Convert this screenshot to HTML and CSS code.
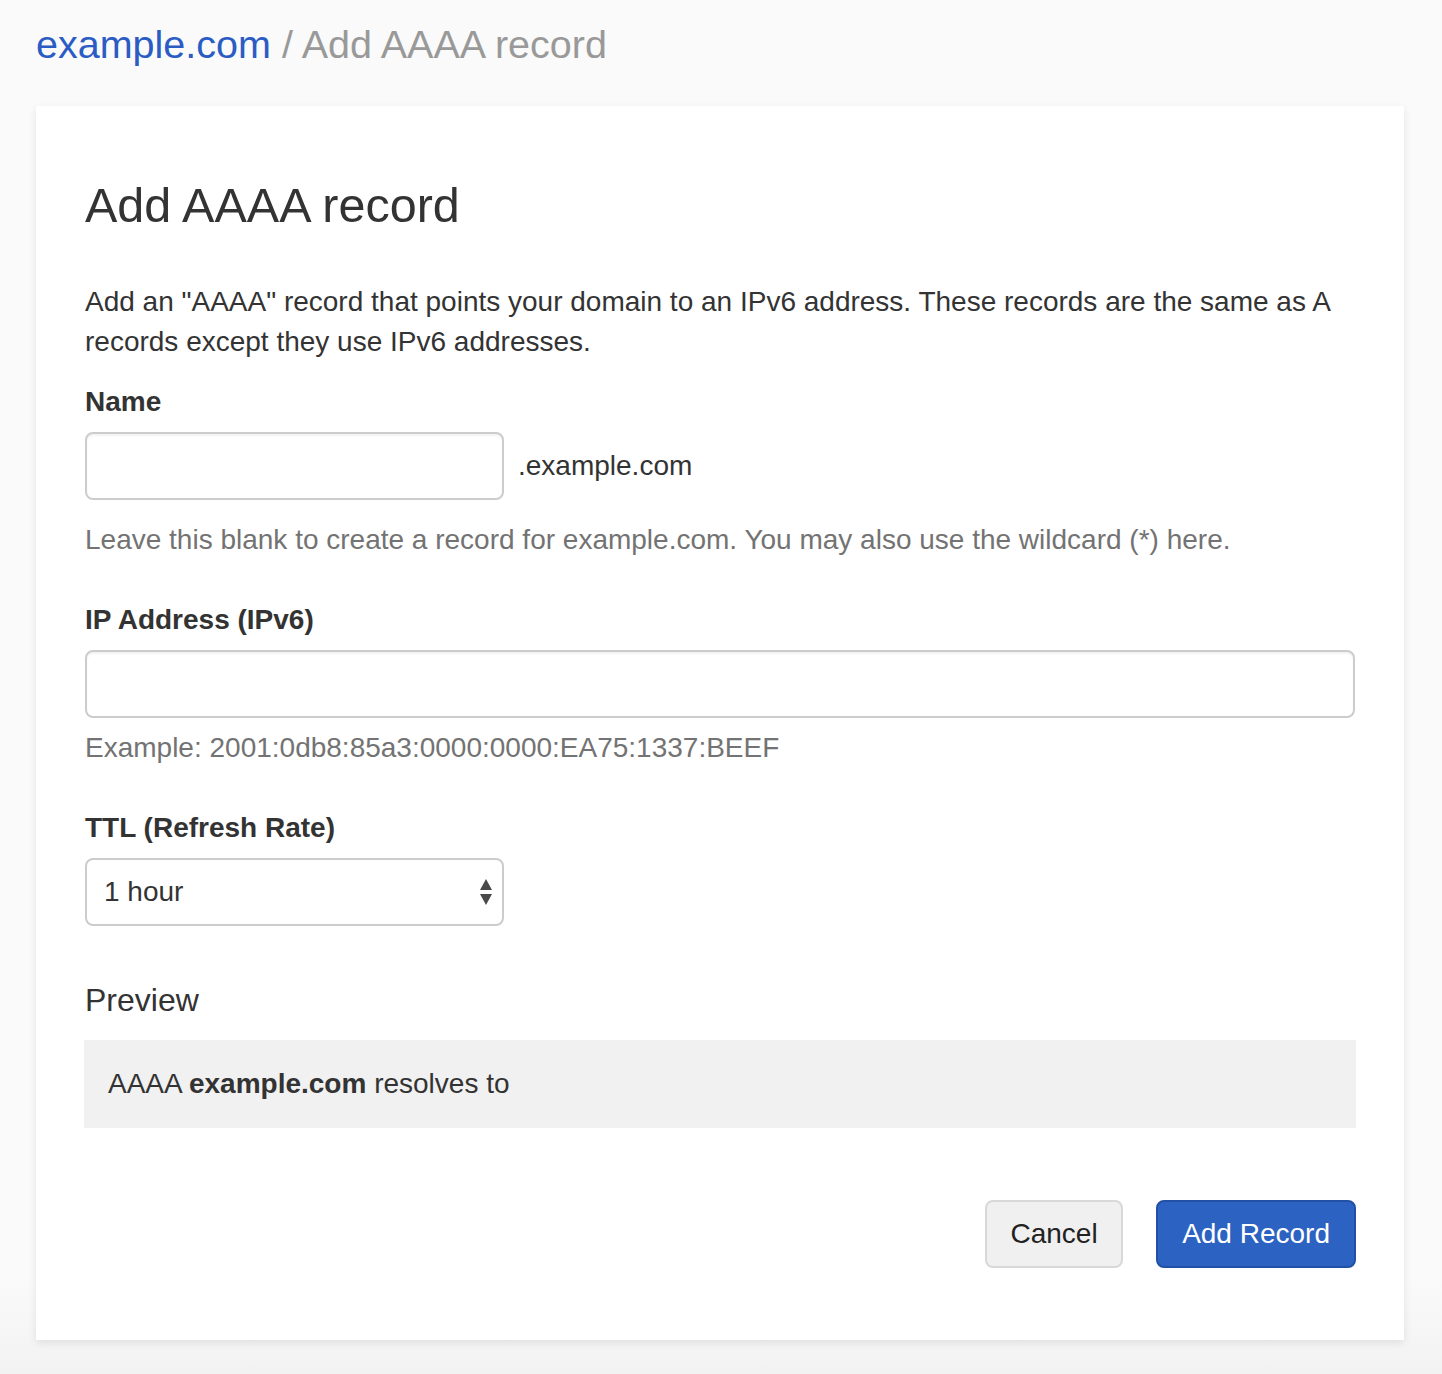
FILE: index.html
```html
<!DOCTYPE html>
<html lang="en">
<head>
<meta charset="utf-8">
<title>Add AAAA record</title>
<link rel="stylesheet" href="styles.css">
</head>
<body>
<div class="page">
  <div class="crumbs"><a class="crumb-link" href="#">example.com</a> <span class="crumb-sep">/</span> <span class="crumb-current">Add AAAA record</span></div>
  <div class="card">
    <h3 class="title">Add AAAA record</h3>
    <p class="intro">Add an "AAAA" record that points your domain to an IPv6 address. These records are the same as A records except they use IPv6 addresses.</p>

    <div class="group">
      <label class="label">Name</label>
      <div class="name-row">
        <input class="input input-name" type="text">
        <span class="suffix">.example.com</span>
      </div>
      <div class="help help-name">Leave this blank to create a record for example.com. You may also use the wildcard (*) here.</div>
    </div>

    <div class="group">
      <label class="label">IP Address (IPv6)</label>
      <input class="input input-wide" type="text">
      <div class="help">Example: 2001:0db8:85a3:0000:0000:EA75:1337:BEEF</div>
    </div>

    <div class="group">
      <label class="label">TTL (Refresh Rate)</label>
      <div class="select">
        <span class="select-value">1 hour</span>
        <svg class="select-arrows" width="14" height="28" viewBox="0 0 14 28"><path d="M7 1 L13 12 L1 12 Z" fill="#4a4a4a"/><path d="M1 16 L13 16 L7 27 Z" fill="#4a4a4a"/></svg>
      </div>
    </div>

    <div class="preview-title">Preview</div>
    <div class="preview">AAAA <strong>example.com</strong> resolves to</div>

    <div class="actions">
      <button class="btn btn-default" type="button">Cancel</button>
      <button class="btn btn-primary" type="button">Add Record</button>
    </div>
  </div>
</div>
</body>
</html>
```

FILE: styles.css
```css
html, body {
  margin: 0;
  padding: 0;
}
body {
  font-family: "Liberation Sans", Arial, Helvetica, sans-serif;
  color: #333;
  background: linear-gradient(to bottom, #fafafa 0, #fafafa 1280px, #f2f2f2 1374px);
  min-height: 1374px;
}
.page {
  padding: 22px 38px 0 36px;
}
.crumbs {
  font-size: 39.5px;
  line-height: 44px;
  color: #999;
  margin-bottom: 40px;
}
.crumb-link {
  color: #2b5cc4;
  text-decoration: none;
}
.card {
  background: #fff;
  box-shadow: 0 3px 8px rgba(0, 0, 0, 0.09);
  padding: 73px 49px 72px;
}
.title {
  font-size: 48.5px;
  font-weight: normal;
  line-height: 53px;
  margin: 0 0 50px;
}
.intro {
  font-size: 28px;
  line-height: 40px;
  margin: 0 0 20px;
}
.group {
  margin-bottom: 40px;
}
.label {
  display: block;
  font-size: 28px;
  line-height: 40px;
  font-weight: bold;
  margin-bottom: 10px;
}
.input {
  display: block;
  box-sizing: border-box;
  height: 68px;
  border: 2px solid #ccc;
  border-radius: 8px;
  background: #fff;
  font-family: inherit;
  font-size: 28px;
  padding: 0 24px;
  margin: 0;
  box-shadow: inset 0 2px 2px rgba(0, 0, 0, 0.05);
}
.name-row {
  display: flex;
  align-items: center;
  gap: 14px;
}
.input-name {
  width: 419px;
}
.suffix {
  font-size: 28px;
  line-height: 40px;
}
.input-wide {
  width: 100%;
}
.help {
  font-size: 28px;
  line-height: 40px;
  color: #737373;
  margin-top: 10px;
}
.help-name {
  margin-top: 20px;
}
.select {
  box-sizing: border-box;
  width: 419px;
  height: 68px;
  border: 2px solid #ccc;
  border-radius: 8px;
  display: flex;
  align-items: center;
  justify-content: space-between;
  padding: 0 9px 0 17px;
  font-size: 28px;
}
.select-arrows {
  display: block;
}
.preview-title {
  font-size: 32px;
  line-height: 35px;
  margin-top: 57px;
  margin-bottom: 22px;
}
.preview {
  background: #f1f1f1;
  font-size: 28px;
  line-height: 40px;
  padding: 24px;
  margin: 0 -1px;
}
.preview strong {
  font-weight: bold;
}
.actions {
  display: flex;
  justify-content: flex-end;
  gap: 33px;
  margin-top: 72px;
  margin-right: -1px;
}
.btn {
  box-sizing: border-box;
  height: 68px;
  padding: 0 23.5px;
  border-radius: 8px;
  font-family: inherit;
  font-size: 28px;
  line-height: 40px;
  cursor: pointer;
}
.btn-default {
  background: #f0f0f0;
  border: 2px solid #d8d8d8;
  color: #222;
}
.btn-primary {
  background: #2c62c2;
  border: 2px solid #2150a6;
  color: #fff;
  padding: 0 24px;
}
```
